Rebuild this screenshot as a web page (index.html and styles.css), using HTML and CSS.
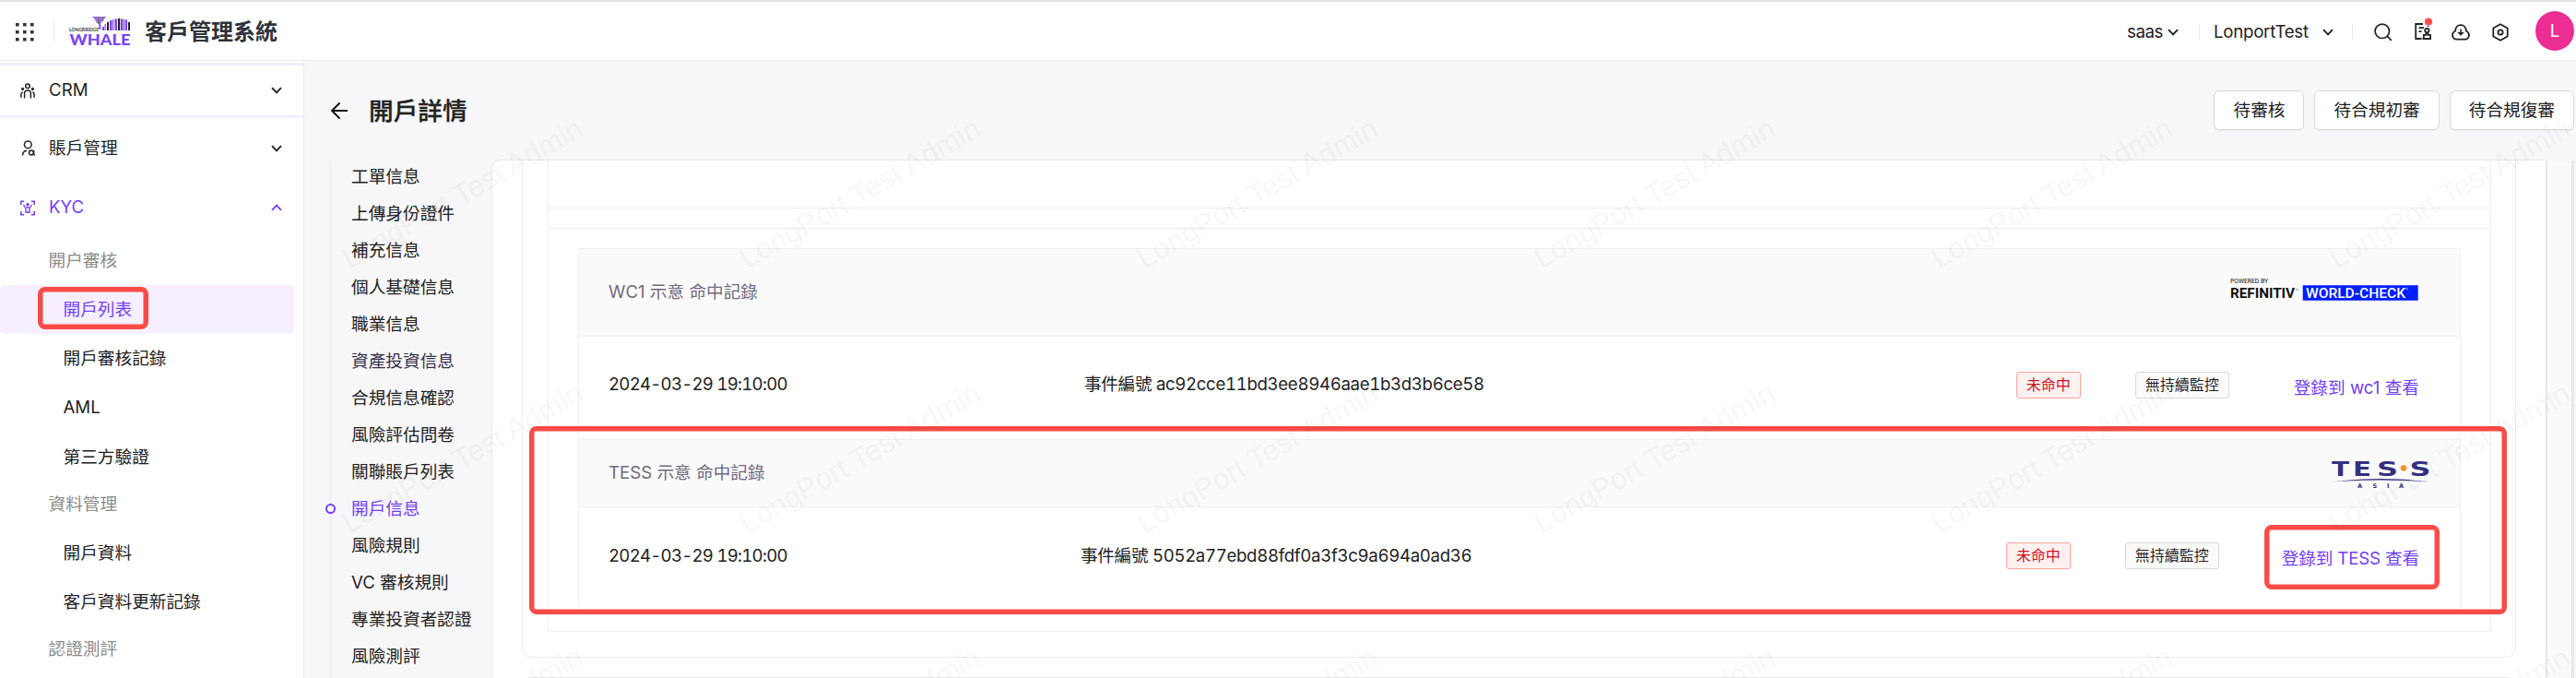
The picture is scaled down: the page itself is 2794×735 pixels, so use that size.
FILE: index.html
```html
<!DOCTYPE html>
<html lang="zh-Hant">
<head>
<meta charset="utf-8">
<title>客戶管理系統</title>
<link rel="stylesheet" href="styles.css">
</head>
<body>
<svg class="defs" width="0" height="0">
  <symbol id="chev" viewBox="0 0 12 8"><path d="M1 1.2 6 6.4 11 1.2" fill="none" stroke="currentColor" stroke-width="1.9"/></symbol>
</svg>
<header class="topbar">
  <svg class="apps" width="20" height="20" viewBox="0 0 20 20" fill="#333"><path d="M0 0h3.6v3.6H0zM8 0h3.6v3.6H8zM16 0h3.6v3.6H16zM0 8h3.6v3.6H0zM8 8h3.6v3.6H8zM16 8h3.6v3.6H16zM0 16h3.6v3.6H0zM8 16h3.6v3.6H8zM16 16h3.6v3.6H16z"/></svg>
  <i class="divider tall"></i>
  <svg class="whale" width="68" height="34" viewBox="0 0 68 34">
    <path d="M25 1h15l-1 2h-3v3l-1.500 2v7h-2.500V9l-3-2-1-3z" fill="#9a6ef0"/>
    <path d="M31 1h2v8h-2zM36 1h1.500v5h-1.500z" fill="#777"/>
    <g fill="#7b45f5"><path d="M36 12h2v4h-2zM44 5h2.500v11H44zM49.500 3.500H52V16h-2.500zM56 3.500h2.500V16H56zM61 4.500h2V16h-2z"/></g>
    <g fill="#9a6ef0"><path d="M38.500 9h1.500v7h-1.500zM47 4h1.500v12H47zM59 4h1.500v12H59z"/></g>
    <g fill="#222"><path d="M41 7h2v9h-2zM53 3h2.200v13H53zM64 7h2v9h-2z"/></g>
    <text x="0" y="16.500" class="whale-sub" textLength="32" lengthAdjust="spacingAndGlyphs">LONGBRIDGE</text>
    <text x="0.500" y="32" class="whale-main" textLength="66" lengthAdjust="spacingAndGlyphs">WHALE</text>
  </svg>
  <span class="brand">客戶管理系統</span>
  <div class="tools">
    <span class="saas">saas</span>
    <svg class="chev c1" width="12" height="8"><use href="#chev"/></svg>
    <i class="divider"></i>
    <span class="org">LonportTest</span>
    <svg class="chev c2" width="12" height="8"><use href="#chev"/></svg>
    <i class="divider d2"></i>
    <svg class="ic-search" width="20" height="20" viewBox="0 0 20 20" fill="none" stroke="#222" stroke-width="1.700"><circle cx="8.800" cy="8.800" r="7.700"/><path d="m14.200 14.200 4.600 4.600"/></svg>
    <svg class="ic-doc" width="22" height="26" viewBox="0 0 22 26" fill="none" stroke="#222" stroke-width="1.800"><path d="M10 7H2.200v16H8.500M15.500 10V9M5.500 11.200h5.500M5.500 15.200h3"/><circle cx="14.400" cy="14" r="2.200"/><path d="M13.400 16.500v2.300h-2.600v3.800M15.400 16.500v2.300H18v3.800M9.500 23h9.500"/><circle cx="16" cy="4.500" r="4.100" fill="#ff4d4f" stroke="none"/></svg>
    <svg class="ic-cloud" width="20" height="18" viewBox="0 0 20 18" fill="none" stroke="#222" stroke-width="1.800"><path d="M4.200 7.500C4.300 3.800 6.600 1.200 10 1.200s5.700 2.600 5.800 6.300c2 .9 3.200 2.500 3.200 4.600 0 2.600-1.900 4.500-4.600 4.500H5.600C2.900 16.600 1 14.700 1 12.100c0-2.100 1.200-3.700 3.200-4.600z"/><path d="M10 5.500v5M8 9.800l2 2 2-2z" fill="#222" stroke-width="1.500"/></svg>
    <svg class="ic-hex" width="18" height="20" viewBox="0 0 18 20" fill="none" stroke="#222" stroke-width="1.800"><path d="m9 1.200 7.700 4.300v9L9 18.800l-7.700-4.300v-9z"/><circle cx="9" cy="10" r="2.600"/></svg>
    <span class="avatar">L</span>
  </div>
</header>
<div class="shell">
  <nav class="side">
    <div class="group crm">
      <svg class="gi" width="16" height="17" viewBox="0 0 16 17" fill="none" stroke="#222" stroke-width="1.500"><circle cx="8" cy="3.200" r="2.300"/><circle cx="2.600" cy="6.500" r="1.200" fill="#222" stroke-width="1"/><circle cx="13.400" cy="6.500" r="1.200" fill="#222" stroke-width="1"/><path d="M4.600 16.500v-5.300C4.600 9 6 8 8 8s3.400 1 3.400 3.200v5.300M.9 15.800v-3.600c0-1.200.6-2 1.900-2.300M15.100 15.800v-3.600c0-1.200-.6-2-1.900-2.300"/></svg>
      <span>CRM</span><svg class="chev" width="12" height="8"><use href="#chev"/></svg>
    </div>
    <div class="group acc">
      <svg class="gi" width="16" height="17" viewBox="0 0 16 17" fill="none" stroke="#222" stroke-width="1.500"><circle cx="8.300" cy="4.800" r="3.900"/><path d="M2.600 16.500c0-3 1.800-5 4.600-5.200"/><circle cx="12" cy="13.500" r="2.400"/><path d="M14.600 11v4.300l1.200 1.200"/></svg>
      <span>賬戶管理</span><svg class="chev" width="12" height="8"><use href="#chev"/></svg>
    </div>
    <div class="group kyc">
      <svg class="gi" width="16" height="17" viewBox="0 0 16 17" fill="none" stroke="currentColor" stroke-width="1.600"><path d="M.8 5V1.200h3.400M11.800 1.200h3.400V5M.8 12v3.800h3.400M11.800 15.800h3.400V12"/><circle cx="8" cy="4.800" r="1.800" fill="currentColor" stroke="none"/><path d="M3.700 4.800c.4 2.200 1.500 3.200 2.300 3.700v4.700h4V8.500c.8-.5 1.900-1.500 2.300-3.700M6.500 7.800h3" stroke-width="1.400"/></svg>
      <span>KYC</span><svg class="chev up" width="12" height="8"><use href="#chev"/></svg>
    </div>
    <div class="sub">開户審核</div>
    <div class="item active"><span>開戶列表</span><i class="mark mark-nav"></i></div>
    <div class="item">開戶審核記錄</div>
    <div class="item">AML</div>
    <div class="item">第三方驗證</div>
    <div class="sub">資料管理</div>
    <div class="item">開戶資料</div>
    <div class="item">客戶資料更新記錄</div>
    <div class="sub">認證測評</div>
  </nav>
  <main class="main">
    <div class="head">
      <svg class="back" width="20" height="20" viewBox="0 0 20 20" fill="none" stroke="#111" stroke-width="1.900"><path d="M19 10H2M10.500 1.500 2 10l8.500 8.500"/></svg>
      <h1>開戶詳情</h1>
      <div class="actions"><button>待審核</button><button>待合規初審</button><button>待合規復審</button></div>
    </div>
    <div class="content">
      <ul class="anchor">
        <li>工單信息</li><li>上傳身份證件</li><li>補充信息</li><li>個人基礎信息</li><li>職業信息</li><li class="tint">資產投資信息</li><li>合規信息確認</li><li>風險評估問卷</li><li>關聯賬戶列表</li><li class="on">開戶信息</li><li>風險規則</li><li>VC 審核規則</li><li>專業投資者認證</li><li>風險測評</li>
      </ul>
      <div class="card">
        <section class="panel">
          <div class="block">
            <div class="strip s1"></div>
            <div class="strip s2"></div>
            <div class="table">
              <div class="th th1"><span>WC1 示意 命中記錄</span>
                <svg class="wc" width="204" height="26" viewBox="0 0 204 26">
                  <text x="0" y="6.500" class="wc-pow" textLength="41" lengthAdjust="spacingAndGlyphs">POWERED BY</text>
                  <text x="0" y="22.500" class="wc-ref" textLength="70" lengthAdjust="spacingAndGlyphs">REFINITIV</text>
                  <circle cx="72.500" cy="14" r="1" fill="none" stroke="#777" stroke-width=".5"/>
                  <path d="M78.700 9.300h125v16.400h-125z" fill="#001eff"/>
                  <text x="82" y="22.500" class="wc-chk" textLength="108" lengthAdjust="spacingAndGlyphs">WORLD-CHECK</text>
                  <circle cx="191.500" cy="13" r="1" fill="none" stroke="#cdf" stroke-width=".5"/>
                </svg>
              </div>
              <div class="tr tr1">
                <span class="time">2024-03-29 19:10:00</span><span class="eid">事件編號 ac92cce11bd3ee8946aae1b3d3b6ce58</span>
                <div class="ops"><span class="tag red">未命中</span><span class="tag">無持續監控</span><a>登錄到 wc1 查看</a></div>
              </div>
              <div class="th th2"><span>TESS 示意 命中記錄</span>
                <svg class="tess" width="108" height="32" viewBox="0 0 108 32">
                  <g class="tess-main"><text x="0" y="17.500" textLength="19" lengthAdjust="spacingAndGlyphs">T</text><text x="23" y="17.500" textLength="20" lengthAdjust="spacingAndGlyphs">E</text><text x="49" y="17.500" textLength="23" lengthAdjust="spacingAndGlyphs">S</text><text x="84.500" y="17.500" textLength="23" lengthAdjust="spacingAndGlyphs">S</text></g>
                  <circle cx="78" cy="9.500" r="3.300" fill="#f7931e"/>
                  <path d="M2 24.300Q54 17.500 105 24.300 54 20.700 2 24.300z" fill="#35307f"/>
                  <g class="tess-sub"><text x="28" y="30.500">A</text><text x="44.500" y="30.500">S</text><text x="60" y="30.500">I</text><text x="73" y="30.500">A</text></g>
                </svg>
              </div>
              <div class="tr tr2">
                <span class="time">2024-03-29 19:10:00</span><span class="eid">事件編號 5052a77ebd88fdf0a3f3c9a694a0ad36</span>
                <div class="ops"><span class="tag red">未命中</span><span class="tag">無持續監控</span><a>登錄到 TESS 查看<i class="mark mark-link"></i></a></div>
              </div>
              <i class="mark mark-row"></i>
            </div>
          </div>
        </section>
        <section class="panel next"></section>
      </div>
      <div class="track"></div>
    </div>
    <svg class="watermark" width="2464" height="669">
      <defs><pattern id="wm" width="431" height="286.700" patternUnits="userSpaceOnUse" x="20" y="68"><text transform="translate(29 158) rotate(-29.700)">LongPort Test Admin</text></pattern></defs>
      <rect width="2464" height="669" fill="url(#wm)"/>
    </svg>
  </main>
</div>
</body>
</html>
```
FILE: styles.css
```css
*, *::before { box-sizing: border-box; }
body {
  margin: 0; width: 2794px; height: 735px; overflow: hidden;
  display: flex; flex-direction: column;
  font: 18.67px/26px Inter, "Noto Sans CJK TC", sans-serif;
  color: #222; background: #fff;
}
svg { overflow: visible; }
.defs { position: absolute; }
i { display: block; }
.topbar {
  flex: none; height: 66px; display: flex; align-items: center;
  padding: 2px 2px 0 17px; border-top: 2px solid #e1e1e1; border-bottom: 1px solid #eaeaea;
}
.divider { width: 1px; height: 17px; background: #e9e9ec; }
.divider.tall { height: 27px; margin: -2px 16px 0 21px; }
.whale { margin-top: -2px; font-family: Lato, sans-serif; }
.whale-sub { font-size: 5px; font-weight: 700; fill: #333; }
.whale-main { font-size: 17.500px; font-weight: 900; fill: #7b45f5; }
.brand { margin-left: 14px; font-size: 24px; font-weight: 700; color: #2f333b; line-height: 32px; }
.tools { margin-left: auto; display: flex; align-items: center; height: 100%; }
.chev { display: block; flex: none; }
.tools .c1 { margin: 0 22px 0 5px; }
.saas { width: 39px; letter-spacing: -.4px; }
.org { width: 103px; margin-left: 15px; letter-spacing: -.25px; }
.tools .c2 { margin: 0 20px 0 15px; }
.ic-search { margin-left: 23px; }
.ic-doc { margin: -6px 0 0 23px; }
.ic-cloud { margin-left: 19px; }
.ic-hex { margin-left: 24px; }
.avatar {
  width: 42px; height: 43px; border-radius: 50%; margin: -2px 0 0 29px;
  background: #ec2d94; color: #fff; text-align: center; line-height: 43px;
}
.shell { flex: 1; display: flex; min-height: 0; }
.side { flex: none; width: 330px; border-right: 1px solid #ececee; padding-top: 2px; }
.group { display: flex; align-items: center; padding: 0 23px 0 22px; height: 64px; }
.group span { margin-left: 15px; }
.group .chev { margin-left: auto; }
.crm { height: 60px; border: solid #f4edff; border-width: 3px 0; }
.acc { padding-top: 1px; }
.kyc { height: 66px; color: #7341f0; }
.up { transform: rotate(180deg); }
.sub { height: 50.600px; line-height: 50.600px; padding-left: 52.500px; color: #8c8c8c; }
.item { height: 53.330px; line-height: 53.330px; padding-left: 68.500px; }
.item.active { position: relative; width: 319px; background: #f5efff; color: #7341f0; border-radius: 5px; }
.mark {
  position: absolute; border: 5px solid #f94b47; border-radius: 8px;
  box-shadow: inset 0 0 0 1px rgba(249, 75, 71, .5);
}
.mark-nav { left: 41px; top: 2px; width: 120px; height: 46px; }
.main { flex: 1; position: relative; display: flex; flex-direction: column; background: #f7f7f9; min-width: 0; }
.head { flex: none; height: 107px; display: flex; align-items: center; padding: 0 2px 0 28px; }
.head h1 { margin: 0 0 0 22px; font-size: 26.670px; font-weight: 500; line-height: 36px; -webkit-text-stroke: .35px currentColor; }
.actions { margin-left: auto; display: flex; gap: 11px; }
.actions button {
  height: 43px; padding: 0 20px; font: inherit; color: inherit; background: #fff;
  border: 1px solid #d9d9d9; border-radius: 6px; box-shadow: 0 2px 0 rgba(0, 0, 0, .02);
}
.content { flex: 1; display: flex; min-height: 0; overflow: hidden; }
.anchor {
  flex: none; width: 176px; height: 580px; margin: 0 0 0 27px; padding: 0 0 0 21px;
  list-style: none; border-left: 3px solid #efefef; white-space: nowrap;
}
.anchor li { height: 40px; line-height: 38px; }
.anchor .tint { color: #37324d; }
.anchor .on { position: relative; color: #7341f0; }
.anchor .on::before {
  content: ""; position: absolute; left: -28.500px; top: 13px; width: 11px; height: 11px;
  border: 2px solid #7341f0; border-radius: 50%; background: #fff;
}
.card {
  flex: none; width: 2228px; height: 600px; padding-left: 32px; background: #fff;
  border: solid #e9e9e9; border-width: 1px 0 0 1px; border-radius: 10px 0 0 0;
}
.panel {
  width: 2163px; height: 539px; padding-left: 27px;
  border: 1px solid #ebebeb; border-top: 0; border-radius: 0 0 10px 10px;
}
.panel.next { margin-top: 21px; height: 60px; border-top: 1px solid #e9e9e9; border-radius: 10px 10px 0 0; }
.block {
  width: 2108px; height: 511px; border: 1px solid #efefef; border-top: 0; border-radius: 0 0 3px 3px;
}
.strip { border-bottom: 1px solid #ececec; }
.s1 { height: 52px; }
.s2 { height: 22px; }
.table { position: relative; margin: 21px 0 0 32px; width: 2042px; border: 1px solid #efefef; border-bottom: 0; border-radius: 3px 3px 0 0; }
.th, .tr { display: flex; align-items: center; padding-left: 32px; }
.th { background: #fafafa; color: #6f6b7d; border-bottom: 1px solid #efefef; }
.th1 { height: 95px; }
.th1 .wc { margin: -8px 45px 0 auto; }
.th2 { height: 74px; border-top: 1px solid #efefef; }
.th2 .tess { margin: 2px 31px 0 auto; }
.wc { font-family: Roboto, sans-serif; }
.wc-pow { font-size: 6.500px; fill: #111; }
.wc-ref { font-size: 14.500px; font-weight: 700; fill: #111; }
.wc-chk { font-size: 14.500px; font-weight: 500; fill: #fff; }
.tess-main { font: bold 22px "DejaVu Sans", sans-serif; fill: #35307f; }
.tess-sub { font: bold 6.500px "DejaVu Sans", sans-serif; fill: #35307f; }
.tr1 { height: 111px; padding-bottom: 7px; }
.tr2 { height: 110px; padding-bottom: 5px; }
.time, .eid { font-variant-numeric: tabular-nums; }
.time { width: 516px; letter-spacing: -.780px; }
.tr2 .time { width: 512px; }
.eid { letter-spacing: -.350px; }
.ops { display: flex; align-items: center; margin: 0 44px 0 auto; }
.tag {
  height: 29px; padding: 0 10px; font-size: 16px; line-height: 27px;
  border: 1px solid #d9d9d9; border-radius: 3px; background: #fafafa;
}
.tag.red { color: #cf1322; border-color: #ffa39e; background: #fff1f0; margin-right: 59px; }
.ops a { position: relative; margin: 7px 0 0 70px; color: #7341f0; }
.tr2 .ops a { margin-left: 68px; letter-spacing: -.15px; }
.mark-link { left: -19px; top: -24px; width: 190px; height: 70px; }
.mark-row { left: -54px; top: 192px; width: 2145px; height: 204px; }
.track { flex: none; width: 31px; margin-top: 1px; background: #fafafa; border: solid #e8e8e8; border-width: 0 3px 0 2px; }
.watermark { position: absolute; left: 0; top: 0; font: 32px "Liberation Sans", sans-serif; fill: rgba(0, 0, 0, .033); pointer-events: none; }
```
